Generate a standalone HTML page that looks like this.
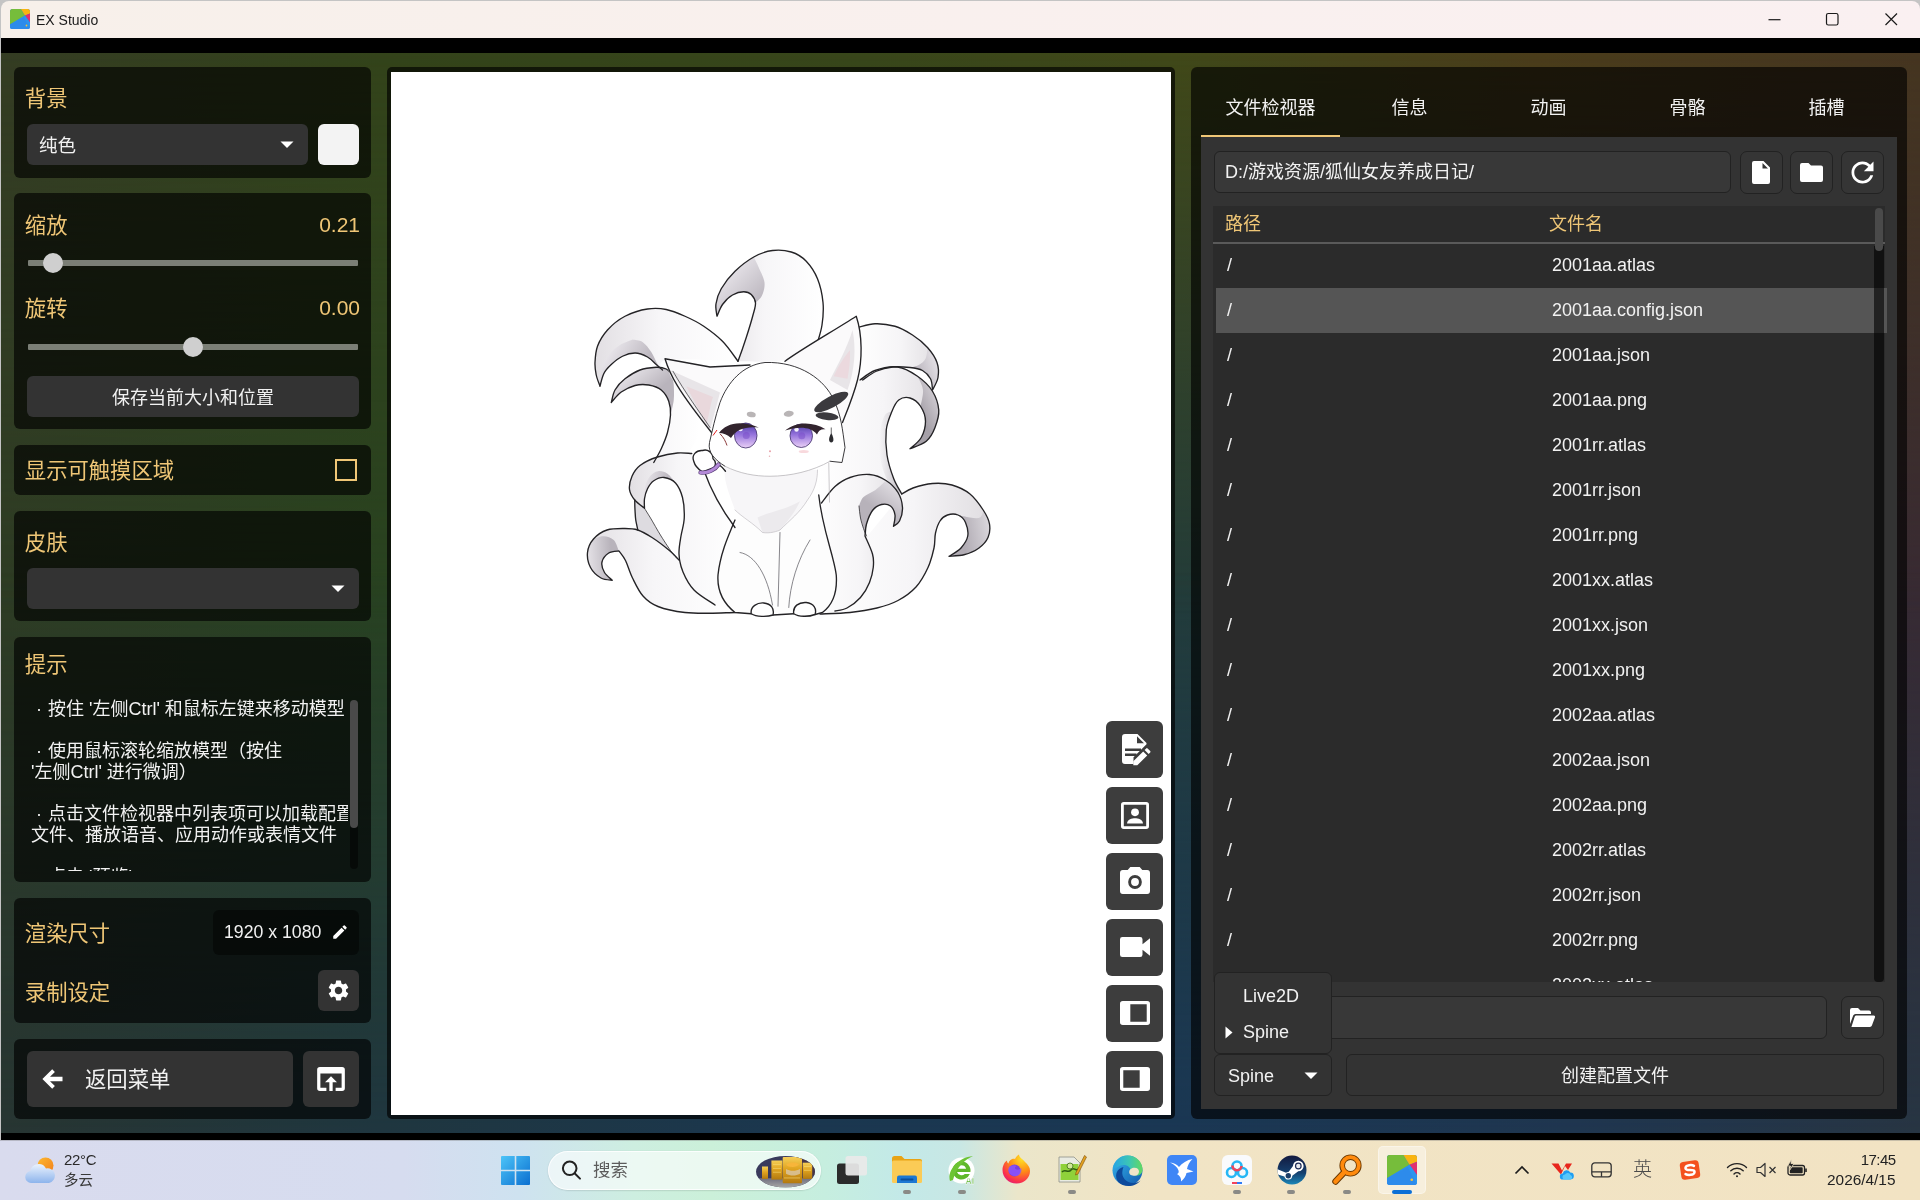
<!DOCTYPE html>
<html lang="zh-CN">
<head>
<meta charset="utf-8">
<title>EX Studio</title>
<style>
*{box-sizing:border-box;margin:0;padding:0}
html,body{width:1920px;height:1200px;overflow:hidden;background:#c4c4c4}
body{font-family:"Liberation Sans","Noto Sans CJK SC",sans-serif;color:#fff;position:relative}
.abs{position:absolute}
#titlebar,#app,#taskbar{will-change:transform}
#titlebar{left:1px;top:1px;width:1919px;height:37px;border-radius:8px 8px 0 0;background:linear-gradient(90deg,#f7f0ea 0%,#f9f0ee 50%,#faf0f1 100%)}
#titlebar .ttl{left:35px;top:9px;font-size:14px;color:#1a1a1a;line-height:20px}
#app{left:1px;top:53px;width:1919px;height:1080px;overflow:hidden;background:#223c3a}
#app .g{position:absolute;left:0;top:0;width:100%;height:100%}
.card{position:absolute;left:13px;width:357px;background:rgba(0,0,0,.64);border-radius:6px}
.h{position:absolute;color:#efc676;font-size:21.33px;line-height:28px;white-space:nowrap}
.btn{position:absolute;background:#333;border-radius:6px;color:#f2f2f2}
.ctr{display:flex;align-items:center;justify-content:center}

#gmid{background:linear-gradient(90deg,#2e3c24 0%,#284220 20%,#253f2e 42%,#223c3a 61%,#2c3238 82%,#382a33 100%)}
#gtop{background:linear-gradient(90deg,#343c23 0%,#33431a 20%,#38461a 45%,#404818 61%,#4a3c1a 80%,#453520 100%);-webkit-mask-image:linear-gradient(180deg,#000 0%,transparent 52%);mask-image:linear-gradient(180deg,#000 0%,transparent 52%)}
#gbot{background:linear-gradient(90deg,#273532 0%,#1f3640 20%,#1b3750 42%,#1a3754 61%,#1f3650 82%,#273543 100%);-webkit-mask-image:linear-gradient(180deg,transparent 48%,#000 100%);mask-image:linear-gradient(180deg,transparent 48%,#000 100%)}
#cv{left:386px;top:14px;width:788px;height:1052px;background:rgba(0,0,0,.66);border-radius:5px}
#cv .w{position:absolute;left:4px;top:5px;width:780px;height:1043px;background:#fff;overflow:hidden}
.cb{position:absolute;left:715px;width:57px;height:57px;background:#3d3d3d;border-radius:6px;display:flex;align-items:center;justify-content:center}
#rp{left:1190px;top:14px;width:716px;height:1052px;background:rgba(0,0,0,.64);border-radius:6px}
#rp .tab{position:absolute;top:0;width:139px;height:70px;line-height:30px;padding-top:26px;text-align:center;font-size:18px;color:#f2f2f2}
#rc{left:10px;top:70px;width:696px;height:972px;background:#333}
.inp{position:absolute;background:#383838;border:1px solid #222;border-radius:6px}
.ib{position:absolute;width:43px;height:43px;background:#353535;border:1px solid #222;border-radius:7px;display:flex;align-items:center;justify-content:center}
#list{left:12px;top:69px;width:672px;height:776px;background:#2b2b2b;clip-path:inset(0 -3px 0 0)}
#list .r{position:absolute;left:3px;width:666px;height:44px;font-size:18px;line-height:42px;color:#f2f2f2}
#list .r i{position:absolute;left:11px;font-style:normal}
#list .r b{position:absolute;left:336px;font-weight:normal;white-space:nowrap}
svg{display:block}
#taskbar{left:0;top:1140px;width:1920px;height:60px;background:linear-gradient(90deg,#d9dbee 0%,#d6dcef 21%,#cee2f0 27%,#cdeee0 33%,#cbf0d9 37%,#c6eedf 43%,#c3e9e8 47%,#c8e7e4 50%,#ebe6ca 53%,#f1e4c5 60%,#f2e3c3 100%)}
</style>
</head>
<body>
<!-- TITLEBAR -->
<div id="titlebar" class="abs">
  <svg class="abs" style="left:9px;top:8px" width="20" height="20" viewBox="0 0 20 20"><defs><clipPath id="ic"><rect width="20" height="20" rx="2.500"/></clipPath></defs><g clip-path="url(#ic)"><rect width="20" height="20" fill="#2f7fe8"/><path d="M0 0h11l4 6.500L0 15.500z" fill="#76bd3b"/><path d="M11 0h9v4.500l-5 2z" fill="#f9b410"/><path d="M20 4.500v9L15 6.500z" fill="#e0306f"/><path d="M15 6.500 20 13.500V20H0v-4.500z" fill="#2c95ee"/><path d="M0 15.500 14 8l6 12H0z" fill="#2e86ea" opacity=".6"/><circle cx="16.500" cy="16.500" r=".9" fill="#f5c33b"/></g></svg>
  <div class="abs ttl">EX Studio</div>
  <svg class="abs" style="left:1759px;top:7px" width="150" height="24" viewBox="0 0 150 24" fill="none" stroke="#1a1a1a" stroke-width="1.200"><path d="M8.500 11.700h12"/><rect x="66.500" y="5.500" width="11.500" height="11.500" rx="1.800"/><path d="M125.500 5.500l11.500 11.500M137 5.500l-11.500 11.500"/></svg>
</div>
<div class="abs" style="left:1px;top:38px;width:1919px;height:1102px;background:#000"></div>
<!-- APP -->
<div id="app" class="abs">
  <div class="g" id="gmid"></div>
  <div class="g" id="gtop"></div>
  <div class="g" id="gbot"></div>
  <!-- LEFT -->

  <!-- card1: background -->
  <div class="card" style="top:14px;height:111px">
    <div class="h" style="left:10.800px;top:18px">背景</div>
    <div class="btn" style="left:13px;top:57px;width:281px;height:41px">
      <div class="abs" style="left:13px;top:9px;font-size:18.5px;line-height:26px;margin-left:-1px">纯色</div>
      <svg class="abs" style="left:253px;top:17px" width="14" height="8" viewBox="0 0 14 8"><path d="M0.5 0.5h13L7 7z" fill="#fff"/></svg>
    </div>
    <div class="abs" style="left:304px;top:57px;width:41px;height:41px;background:#f3f3f3;border-radius:6px"></div>
  </div>
  <!-- card2: scale / rotate -->
  <div class="card" style="top:140px;height:236px">
    <div class="h" style="left:10.800px;top:19px">缩放</div>
    <div class="h" style="right:11px;top:18px;font-size:21px">0.21</div>
    <div class="abs" style="left:14px;top:67px;width:330px;height:6px;background:#7b7f76;border-radius:1px"></div>
    <div class="abs" style="left:29px;top:60px;width:20px;height:20px;border-radius:50%;background:#cfcfcf"></div>
    <div class="h" style="left:10.800px;top:102px">旋转</div>
    <div class="h" style="right:11px;top:101px;font-size:21px">0.00</div>
    <div class="abs" style="left:14px;top:151px;width:330px;height:6px;background:#7b7f76;border-radius:1px"></div>
    <div class="abs" style="left:169px;top:144px;width:20px;height:20px;border-radius:50%;background:#cfcfcf"></div>
    <div class="btn ctr" style="left:13px;top:183px;width:332px;height:41px;font-size:18px;padding-bottom:2px">保存当前大小和位置</div>
  </div>
  <!-- card3: touch area -->
  <div class="card" style="top:392px;height:50px">
    <div class="h" style="left:10.800px;top:12px">显示可触摸区域</div>
    <div class="abs" style="left:321px;top:14px;width:22px;height:22px;border:2px solid #efc676"></div>
  </div>
  <!-- card4: skin -->
  <div class="card" style="top:458px;height:110px">
    <div class="h" style="left:10.800px;top:18px">皮肤</div>
    <div class="btn" style="left:13px;top:57px;width:332px;height:41px">
      <svg class="abs" style="left:304px;top:17px" width="14" height="8" viewBox="0 0 14 8"><path d="M0.5 0.5h13L7 7z" fill="#fff"/></svg>
    </div>
  </div>
  <!-- card5: tips -->
  <div class="card" style="top:584px;height:245px;overflow:hidden">
    <div class="h" style="left:10.800px;top:14px">提示</div>
    <div class="abs" id="tips" style="left:17px;top:62px;width:317px;height:172px;overflow:hidden;font-size:18px;line-height:21px;color:#f2f2f2;white-space:nowrap">
      <p>&nbsp;·<span style="margin-left:6px"></span>按住 '左侧Ctrl' 和鼠标左键来移动模型</p>
      <p style="margin-top:21px">&nbsp;·<span style="margin-left:6px"></span>使用鼠标滚轮缩放模型（按住<br>'左侧Ctrl' 进行微调）</p>
      <p style="margin-top:21px">&nbsp;·<span style="margin-left:6px"></span>点击文件检视器中列表项可以加载配置<br>文件、播放语音、应用动作或表情文件</p>
      <p style="margin-top:21px">&nbsp;·<span style="margin-left:6px"></span>点击 '预览'</p>
    </div>
    <div class="abs" style="left:336px;top:185px;width:8.400px;height:47px;background:rgba(0,0,0,.5);border-radius:0 0 4px 4px"></div>
    <div class="abs" style="left:336px;top:63px;width:8.400px;height:128px;background:#4a4a4a;border-radius:4px"></div>
  </div>
  <!-- card6: render size -->
  <div class="card" style="top:845px;height:125px">
    <div class="h" style="left:10.800px;top:22px">渲染尺寸</div>
    <div class="abs" style="left:199px;top:12px;width:146px;height:45px;background:rgba(0,0,0,.45);border-radius:6px">
      <div class="abs" style="left:11px;top:10px;font-size:17.7px;line-height:24px;color:#f2f2f2;white-space:nowrap">1920 x 1080</div>
      <svg class="abs" style="left:118px;top:13px" width="18" height="18" viewBox="0 0 24 24"><path fill="#fff" d="M3 17.25V21h3.75L17.81 9.94l-3.75-3.75L3 17.25zM20.71 7.04a1 1 0 0 0 0-1.41l-2.34-2.34a1 1 0 0 0-1.41 0l-1.83 1.83 3.75 3.75 1.83-1.83z"/></svg>
    </div>
    <div class="h" style="left:10.800px;top:81px">录制设定</div>
    <div class="btn ctr" style="left:304px;top:72px;width:41px;height:41px">
      <svg width="25" height="25" viewBox="0 0 24 24"><path fill="#fff" d="M19.14 12.94c.04-.3.06-.61.06-.94 0-.32-.02-.64-.07-.94l2.03-1.58a.49.49 0 0 0 .12-.61l-1.92-3.32a.488.488 0 0 0-.59-.22l-2.39.96c-.5-.38-1.03-.7-1.62-.94l-.36-2.54a.484.484 0 0 0-.48-.41h-3.84c-.24 0-.43.17-.47.41l-.36 2.54c-.59.24-1.13.57-1.62.94l-2.39-.96c-.22-.08-.47 0-.59.22L2.74 8.87c-.12.21-.08.47.12.61l2.03 1.58c-.05.3-.09.63-.09.94s.02.64.07.94l-2.03 1.58a.49.49 0 0 0-.12.61l1.92 3.32c.12.22.37.29.59.22l2.39-.96c.5.38 1.03.7 1.62.94l.36 2.54c.05.24.24.41.48.41h3.84c.24 0 .44-.17.47-.41l.36-2.54c.59-.24 1.13-.56 1.62-.94l2.39.96c.22.08.47 0 .59-.22l1.92-3.32c.12-.22.07-.47-.12-.61l-2.01-1.58zM12 15.6c-1.98 0-3.6-1.62-3.6-3.6s1.62-3.6 3.6-3.6 3.6 1.62 3.6 3.6-1.62 3.6-3.6 3.6z"/></svg>
    </div>
  </div>
  <!-- card7: back -->
  <div class="card" style="top:986px;height:80px">
    <div class="btn" style="left:13px;top:12px;width:266px;height:56px">
      <svg class="abs" style="left:15px;top:17px" width="21" height="22" viewBox="0 0 21 22"><path fill="#fff" d="M10.2 1.2 12.9 3.9 8 8.8H20.5v4.4H8l4.9 4.9-2.7 2.7L0.4 11z"/></svg>
      <div class="abs" style="left:58px;top:14px;font-size:21.33px;line-height:30px;white-space:nowrap">返回菜单</div>
    </div>
    <div class="btn ctr" style="left:289px;top:12px;width:56px;height:56px">
      <svg width="28" height="24" viewBox="0 0 30 26"><path fill="#fff" fill-rule="evenodd" d="M3 0h24a3 3 0 0 1 3 3v20a3 3 0 0 1-3 3h-7v-3.5h6.5V7h-23v15.5H10V26H3a3 3 0 0 1-3-3V3a3 3 0 0 1 3-3zM15 10l6.5 6.5h-4.7V26h-3.6v-9.5H8.500z"/></svg>
    </div>
  </div>
  <!-- CANVAS -->

  <div id="cv" class="abs">
    <div class="w">
      <!-- FOX -->
<svg class="abs" style="left:169px;top:158px" width="480" height="470" viewBox="0 0 1920 1880">
<defs>
<linearGradient id="tgL" x1="0" y1="0" x2="1" y2="0"><stop offset="0" stop-color="#e2dfe3"/><stop offset=".45" stop-color="#f7f6f8"/><stop offset="1" stop-color="#fff"/></linearGradient>
<linearGradient id="tgR" x1="1" y1="0" x2="0" y2="0"><stop offset="0" stop-color="#e0dde1"/><stop offset=".45" stop-color="#f6f5f7"/><stop offset="1" stop-color="#fff"/></linearGradient>
<linearGradient id="eye" x1="0" y1="0" x2="0" y2="1"><stop offset="0" stop-color="#4b3aa6"/><stop offset=".45" stop-color="#9472dc"/><stop offset="1" stop-color="#ead0f6"/></linearGradient>
<linearGradient id="g1" gradientUnits="userSpaceOnUse" x1="800" y1="290" x2="660" y2="150"><stop offset="0" stop-color="#bbb6be" stop-opacity="1"/><stop offset="1" stop-color="#ebe8ed" stop-opacity="1"/></linearGradient>
<linearGradient id="g9" gradientUnits="userSpaceOnUse" x1="1430" y1="575" x2="1520" y2="540"><stop offset="0" stop-color="#bcb7bf" stop-opacity="1"/><stop offset="1" stop-color="#e6e3e8" stop-opacity="1"/></linearGradient>
<linearGradient id="g2" gradientUnits="userSpaceOnUse" x1="345" y1="525" x2="215" y2="440"><stop offset="0" stop-color="#bdb8c0" stop-opacity="1"/><stop offset="1" stop-color="#ebe8ed" stop-opacity="1"/></linearGradient>
<linearGradient id="g3" gradientUnits="userSpaceOnUse" x1="380" y1="650" x2="300" y2="550"><stop offset="0" stop-color="#b9b4bc" stop-opacity="1"/><stop offset="1" stop-color="#e4e1e6" stop-opacity="1"/></linearGradient>
<linearGradient id="g8" gradientUnits="userSpaceOnUse" x1="1440" y1="730" x2="1525" y2="690"><stop offset="0" stop-color="#a5a0a8" stop-opacity="1"/><stop offset="1" stop-color="#d2ced4" stop-opacity="1"/></linearGradient>
<linearGradient id="g8s" gradientUnits="userSpaceOnUse" x1="1275" y1="900" x2="1345" y2="900"><stop offset="0" stop-color="#d6d3d8" stop-opacity="0"/><stop offset="1" stop-color="#cfcbd1" stop-opacity="1"/></linearGradient>
<linearGradient id="g4" gradientUnits="userSpaceOnUse" x1="425" y1="1005" x2="345" y2="985"><stop offset="0" stop-color="#bfbac2" stop-opacity="1"/><stop offset="1" stop-color="#e6e3e8" stop-opacity="1"/></linearGradient>
<linearGradient id="g5" gradientUnits="userSpaceOnUse" x1="205" y1="1295" x2="115" y2="1300"><stop offset="0" stop-color="#b8b3bb" stop-opacity="1"/><stop offset="1" stop-color="#e2dfe4" stop-opacity="1"/></linearGradient>
<linearGradient id="g7" gradientUnits="userSpaceOnUse" x1="1610" y1="1210" x2="1725" y2="1190"><stop offset="0" stop-color="#b1acb4" stop-opacity="1"/><stop offset="1" stop-color="#dcd9de" stop-opacity="1"/></linearGradient>
<linearGradient id="g6" gradientUnits="userSpaceOnUse" x1="1270" y1="1120" x2="1345" y2="1015"><stop offset="0" stop-color="#b7b2ba" stop-opacity="1"/><stop offset="1" stop-color="#e2dfe4" stop-opacity="1"/></linearGradient>
</defs>
<g stroke="none">
<path fill="url(#tgL)" d="M712,525 C718,509 735,461 745,430 C755,399 766,363 772,340 C778,317 783,306 782,292 C781,278 773,266 765,258 C757,250 748,247 735,247 C722,247 704,252 690,260 C676,268 660,284 650,298 C640,312 632,337 628,345 C627,337 621,313 624,295 C627,277 632,257 645,235 C658,213 678,186 700,165 C722,144 750,122 775,108 C800,94 825,85 850,82 C875,79 902,81 925,88 C948,95 968,107 985,125 C1002,143 1019,168 1030,195 C1041,222 1049,259 1052,290 C1055,321 1052,353 1048,380 C1044,407 1033,438 1030,450 C1008,462 953,508 900,520 C847,532 743,524 712,525 Z"/>
<path fill="url(#g1)" d="M628,345 C627,337 621,313 624,295 C627,277 632,257 645,235 C658,213 678,186 700,165 C722,144 762,118 775,108 C778,115 788,133 795,150 C802,167 816,191 818,210 C820,229 814,248 808,262 C802,276 786,287 782,292 C779,286 773,266 765,258 C757,250 748,247 735,247 C722,247 704,252 690,260 C676,268 660,284 650,298 C640,312 632,337 628,345 Z"/>
<path fill="url(#tgR)" d="M1190,390 C1202,388 1235,376 1260,375 C1285,374 1315,378 1340,385 C1365,392 1388,406 1410,420 C1432,434 1454,452 1470,470 C1486,488 1501,510 1508,530 C1515,550 1515,572 1512,590 C1509,608 1494,632 1490,640 C1489,632 1489,608 1482,595 C1475,582 1464,570 1450,562 C1436,554 1420,552 1400,550 C1380,548 1352,546 1330,548 C1308,550 1285,556 1265,565 C1245,574 1219,594 1210,600 C1205,607 1183,675 1180,640 C1177,605 1188,432 1190,390 Z"/>
<path fill="url(#g9)" d="M1490,640 C1494,632 1509,608 1512,590 C1515,572 1515,550 1508,530 C1501,510 1476,480 1470,470 C1469,478 1468,503 1462,515 C1456,527 1445,534 1435,540 C1425,546 1406,548 1400,550 C1408,552 1436,554 1450,562 C1464,570 1475,582 1482,595 C1489,608 1489,632 1490,640 Z"/>
<path fill="url(#tgL)" d="M712,525 C702,512 673,468 650,445 C627,422 600,402 575,385 C550,368 525,356 500,345 C475,334 450,323 425,318 C400,313 378,312 350,316 C322,320 287,331 260,345 C233,359 208,380 190,400 C172,420 158,443 150,465 C142,487 141,511 140,530 C139,549 142,564 145,580 C148,596 158,618 160,625 C162,617 168,590 175,575 C182,560 192,550 205,538 C218,526 234,513 250,505 C266,497 283,492 300,492 C317,492 336,500 350,508 C364,516 375,529 385,538 C395,547 406,556 410,560 C413,553 380,526 430,520 C480,514 665,524 712,525 Z"/>
<path fill="url(#g2)" d="M160,625 C161,614 159,581 165,560 C171,539 182,517 195,500 C208,483 224,470 240,460 C256,450 282,442 290,438 C297,440 318,440 330,448 C342,456 355,473 365,488 C375,503 384,528 392,540 C400,552 407,557 410,560 C406,556 395,547 385,538 C375,529 364,516 350,508 C336,500 317,492 300,492 C283,492 266,497 250,505 C234,513 218,526 205,538 C192,550 182,560 175,575 C168,590 162,617 160,625 Z"/>
<path fill="url(#tgL)" d="M448,578 C444,574 436,561 425,556 C414,551 402,548 385,549 C368,550 341,552 320,560 C299,568 277,582 260,595 C243,608 229,624 220,640 C211,656 208,682 205,690 C212,683 229,659 245,648 C261,637 282,627 300,622 C318,617 338,617 355,620 C372,623 392,629 405,640 C418,651 429,668 435,685 C441,702 443,719 442,740 C441,761 436,788 430,810 C424,832 414,855 405,875 C396,895 380,921 375,930 C396,925 469,923 500,900 C531,877 557,823 560,790 C563,757 539,735 520,700 C501,665 460,598 448,578 Z"/>
<path fill="url(#g3)" d="M448,578 C444,574 436,561 425,556 C414,551 402,548 385,549 C368,550 341,552 320,560 C299,568 277,582 260,595 C243,608 229,624 220,640 C211,656 208,682 205,690 C212,683 229,659 245,648 C261,637 282,627 300,622 C318,617 338,617 355,620 C372,623 392,629 405,640 C418,651 429,668 435,685 C441,702 441,731 442,740 C444,730 453,700 455,680 C457,660 456,637 455,620 C454,603 449,585 448,578 Z"/>
<path fill="url(#tgR)" d="M1200,600 C1210,594 1235,571 1260,562 C1285,553 1322,544 1350,548 C1378,552 1407,569 1430,585 C1453,601 1476,622 1490,645 C1504,668 1513,696 1515,720 C1517,744 1508,769 1500,790 C1492,811 1482,831 1465,845 C1448,859 1411,870 1400,875 C1408,868 1435,848 1445,830 C1455,812 1462,786 1462,765 C1462,744 1452,720 1442,705 C1432,690 1414,676 1400,672 C1386,668 1367,671 1355,680 C1343,689 1336,705 1328,725 C1320,745 1308,771 1305,800 C1302,829 1303,868 1308,900 C1313,932 1325,969 1335,995 C1345,1021 1362,1046 1367,1056 C1316,1060 1114,1106 1060,1080 C1006,1054 1025,972 1040,900 C1055,828 1123,700 1150,650 C1177,600 1192,608 1200,600 Z"/>
<path fill="url(#g8)" d="M1400,875 C1411,870 1448,859 1465,845 C1482,831 1492,811 1500,790 C1508,769 1517,744 1515,720 C1513,696 1504,668 1490,645 C1476,622 1440,595 1430,585 C1434,594 1450,620 1452,640 C1454,660 1444,694 1442,705 C1445,715 1462,744 1462,765 C1462,786 1455,812 1445,830 C1435,848 1408,868 1400,875 Z"/>
<path fill="url(#g8s)" d="M1328,725 C1324,738 1308,771 1305,800 C1302,829 1303,868 1308,900 C1313,932 1325,969 1335,995 C1345,1021 1362,1046 1367,1056 C1362,1053 1346,1053 1335,1040 C1324,1027 1309,1003 1300,980 C1291,957 1283,930 1280,900 C1277,870 1279,827 1282,800 C1285,773 1292,752 1300,740 C1308,728 1323,728 1328,725 Z"/>
<path fill="#dddbe0" d="M299,1080 C302,1083 312,1094 318,1100 C324,1106 335,1111 338,1113 C342,1120 351,1134 362,1152 C373,1170 389,1200 404,1224 C419,1248 440,1280 452,1296 C464,1312 472,1316 476,1320 C470,1314 458,1299 440,1284 C422,1269 390,1244 368,1230 C346,1216 320,1205 311,1200 C310,1193 305,1173 303,1160 C301,1147 301,1133 300,1120 C299,1107 299,1087 299,1080 Z"/>
<path fill="url(#tgL)" d="M527,894 C518,894 493,890 470,892 C447,894 415,900 390,908 C365,916 337,929 320,942 C303,955 295,969 288,985 C281,1001 276,1022 278,1038 C280,1054 289,1068 299,1080 C309,1092 332,1108 338,1113 C338,1107 336,1088 338,1075 C340,1062 344,1047 350,1035 C356,1023 364,1010 375,1003 C386,996 402,988 416,990 C430,992 450,999 462,1012 C474,1025 484,1047 490,1070 C496,1093 498,1126 497,1152 C496,1178 488,1200 484,1224 C480,1248 475,1272 476,1296 C477,1320 482,1344 492,1368 C502,1392 515,1418 536,1440 C557,1462 606,1490 620,1500 C633,1498 687,1547 700,1490 C713,1433 710,1252 700,1160 C690,1068 669,984 640,940 C611,896 546,902 527,894 Z"/>
<path fill="url(#g4)" d="M338,1113 C338,1107 336,1088 338,1075 C340,1062 344,1047 350,1035 C356,1023 364,1010 375,1003 C386,996 402,988 416,990 C430,992 454,1008 462,1012 C457,1006 442,983 430,975 C418,967 404,963 392,965 C380,967 369,974 360,985 C351,996 344,1009 340,1030 C336,1051 338,1099 338,1113 Z"/>
<path fill="url(#tgL)" d="M476,1320 C470,1314 458,1299 440,1284 C422,1269 390,1244 368,1230 C346,1216 329,1206 311,1200 C293,1194 280,1194 260,1194 C240,1194 209,1193 188,1200 C167,1207 147,1221 134,1236 C121,1251 112,1271 110,1290 C108,1309 113,1333 122,1350 C131,1367 150,1384 164,1392 C178,1400 202,1400 209,1401 C204,1396 185,1382 178,1370 C171,1358 165,1341 168,1328 C171,1315 184,1299 195,1292 C206,1285 229,1285 236,1284 C240,1290 253,1304 262,1322 C271,1340 278,1368 290,1392 C302,1416 315,1445 332,1464 C349,1483 364,1495 392,1506 C420,1517 465,1526 500,1530 C535,1534 567,1533 600,1533 C633,1533 683,1530 700,1530 C687,1525 647,1515 620,1500 C593,1485 560,1470 536,1440 C512,1410 486,1340 476,1320 Z"/>
<path fill="url(#g5)" d="M209,1401 C202,1400 178,1400 164,1392 C150,1384 131,1367 122,1350 C113,1333 108,1309 110,1290 C112,1271 130,1245 134,1236 C141,1234 162,1224 175,1225 C188,1226 205,1230 215,1240 C225,1250 232,1277 236,1284 C229,1285 206,1285 195,1292 C184,1299 171,1315 168,1328 C165,1341 171,1358 178,1370 C185,1382 204,1396 209,1401 Z"/>
<path fill="url(#tgR)" d="M1367,1056 C1374,1052 1392,1039 1412,1032 C1432,1025 1464,1016 1490,1014 C1516,1012 1543,1013 1568,1020 C1593,1027 1619,1039 1640,1056 C1661,1073 1681,1102 1694,1122 C1707,1142 1715,1158 1718,1176 C1721,1194 1719,1214 1712,1230 C1705,1246 1692,1260 1676,1272 C1660,1284 1636,1294 1616,1299 C1596,1304 1566,1304 1556,1305 C1564,1300 1592,1286 1604,1272 C1616,1258 1628,1241 1631,1224 C1634,1207 1628,1184 1622,1170 C1616,1156 1604,1145 1592,1140 C1580,1135 1562,1136 1550,1140 C1538,1144 1528,1152 1520,1164 C1512,1176 1506,1194 1502,1212 C1498,1230 1501,1249 1496,1272 C1491,1295 1484,1324 1472,1350 C1460,1376 1444,1406 1424,1428 C1404,1450 1378,1468 1352,1482 C1326,1496 1300,1504 1268,1512 C1236,1520 1198,1526 1160,1530 C1122,1534 1060,1535 1040,1536 C1050,1510 1065,1436 1100,1380 C1135,1324 1206,1254 1250,1200 C1294,1146 1348,1080 1367,1056 Z"/>
<path fill="url(#g7)" d="M1556,1305 C1566,1304 1596,1304 1616,1299 C1636,1294 1660,1284 1676,1272 C1692,1260 1705,1246 1712,1230 C1719,1214 1721,1194 1718,1176 C1715,1158 1698,1131 1694,1122 C1692,1127 1689,1145 1680,1150 C1671,1155 1655,1152 1640,1150 C1625,1148 1600,1142 1592,1140 C1597,1145 1616,1156 1622,1170 C1628,1184 1634,1207 1631,1224 C1628,1241 1616,1258 1604,1272 C1592,1286 1564,1300 1556,1305 Z"/>
<path fill="url(#tgR)" d="M1046,1092 C1055,1081 1081,1043 1100,1026 C1119,1009 1137,998 1160,990 C1183,982 1214,976 1238,978 C1262,980 1285,990 1304,1002 C1323,1014 1341,1032 1352,1050 C1363,1068 1369,1091 1370,1110 C1371,1129 1364,1152 1358,1164 C1352,1176 1338,1182 1334,1185 C1335,1178 1342,1154 1340,1140 C1338,1126 1331,1111 1322,1104 C1313,1097 1298,1095 1286,1098 C1274,1101 1260,1109 1250,1122 C1240,1135 1231,1159 1226,1176 C1221,1193 1221,1216 1220,1224 C1225,1236 1244,1275 1250,1296 C1256,1317 1255,1331 1253,1350 C1251,1369 1246,1390 1238,1410 C1230,1430 1217,1453 1202,1470 C1187,1487 1165,1503 1148,1512 C1131,1521 1108,1522 1100,1524 C1083,1525 1009,1602 1000,1530 C991,1458 1038,1165 1046,1092 Z"/>
<path fill="url(#g6)" d="M1334,1185 C1338,1182 1352,1176 1358,1164 C1364,1152 1371,1129 1370,1110 C1369,1091 1363,1068 1352,1050 C1341,1032 1312,1010 1304,1002 C1297,1008 1277,1029 1262,1040 C1247,1051 1225,1057 1214,1068 C1203,1079 1199,1098 1196,1104 C1197,1112 1199,1137 1202,1152 C1205,1167 1210,1182 1214,1194 C1218,1206 1224,1219 1226,1224 C1226,1216 1222,1193 1226,1176 C1230,1159 1240,1135 1250,1122 C1260,1109 1274,1101 1286,1098 C1298,1095 1313,1097 1322,1104 C1331,1111 1338,1126 1340,1140 C1342,1154 1335,1178 1334,1185 Z"/>
</g>
<g fill="none" stroke="#242326" stroke-linejoin="round" stroke-linecap="round">
<path stroke-width="5.4" d="M712,525 C718,509 735,461 745,430 C755,399 766,363 772,340 C778,317 783,306 782,292 C781,278 773,266 765,258 C757,250 748,247 735,247 C722,247 704,252 690,260 C676,268 660,284 650,298 C640,312 632,337 628,345 C627,337 621,313 624,295 C627,277 632,257 645,235 C658,213 678,186 700,165 C722,144 750,122 775,108 C800,94 825,85 850,82 C875,79 902,81 925,88 C948,95 968,107 985,125 C1002,143 1019,168 1030,195 C1041,222 1049,259 1052,290 C1055,321 1052,353 1048,380 C1044,407 1033,438 1030,450"/>
<path stroke-width="5.4" d="M1190,390 C1202,388 1235,376 1260,375 C1285,374 1315,378 1340,385 C1365,392 1388,406 1410,420 C1432,434 1454,452 1470,470 C1486,488 1501,510 1508,530 C1515,550 1515,572 1512,590 C1509,608 1494,632 1490,640 C1489,632 1489,608 1482,595 C1475,582 1464,570 1450,562 C1436,554 1420,552 1400,550 C1380,548 1352,546 1330,548 C1308,550 1285,556 1265,565 C1245,574 1219,594 1210,600"/>
<path stroke-width="5.4" d="M712,525 C702,512 673,468 650,445 C627,422 600,402 575,385 C550,368 525,356 500,345 C475,334 450,323 425,318 C400,313 378,312 350,316 C322,320 287,331 260,345 C233,359 208,380 190,400 C172,420 158,443 150,465 C142,487 141,511 140,530 C139,549 142,564 145,580 C148,596 158,618 160,625 C162,617 168,590 175,575 C182,560 192,550 205,538 C218,526 234,513 250,505 C266,497 283,492 300,492 C317,492 336,500 350,508 C364,516 375,529 385,538 C395,547 406,556 410,560"/>
<path stroke-width="5.4" d="M448,578 C444,574 436,561 425,556 C414,551 402,548 385,549 C368,550 341,552 320,560 C299,568 277,582 260,595 C243,608 229,624 220,640 C211,656 208,682 205,690 C212,683 229,659 245,648 C261,637 282,627 300,622 C318,617 338,617 355,620 C372,623 392,629 405,640 C418,651 429,668 435,685 C441,702 443,719 442,740 C441,761 436,788 430,810 C424,832 414,855 405,875 C396,895 380,921 375,930"/>
<path stroke-width="5.4" d="M1200,600 C1210,594 1235,571 1260,562 C1285,553 1322,544 1350,548 C1378,552 1407,569 1430,585 C1453,601 1476,622 1490,645 C1504,668 1513,696 1515,720 C1517,744 1508,769 1500,790 C1492,811 1482,831 1465,845 C1448,859 1411,870 1400,875 C1408,868 1435,848 1445,830 C1455,812 1462,786 1462,765 C1462,744 1452,720 1442,705 C1432,690 1414,676 1400,672 C1386,668 1367,671 1355,680 C1343,689 1336,705 1328,725 C1320,745 1308,771 1305,800 C1302,829 1303,868 1308,900 C1313,932 1325,969 1335,995 C1345,1021 1362,1046 1367,1056"/>
<path stroke-width="5.4" d="M299,1080 C299,1087 299,1107 300,1120 C301,1133 301,1147 303,1160 C305,1173 310,1193 311,1200"/>
<path stroke-width="3.0" d="M338,1113 C342,1120 351,1134 362,1152 C373,1170 389,1200 404,1224 C419,1248 440,1280 452,1296 C464,1312 472,1316 476,1320"/>
<path stroke-width="5.4" d="M527,894 C518,894 493,890 470,892 C447,894 415,900 390,908 C365,916 337,929 320,942 C303,955 295,969 288,985 C281,1001 276,1022 278,1038 C280,1054 289,1068 299,1080 C309,1092 332,1108 338,1113 C338,1107 336,1088 338,1075 C340,1062 344,1047 350,1035 C356,1023 364,1010 375,1003 C386,996 402,988 416,990 C430,992 450,999 462,1012 C474,1025 484,1047 490,1070 C496,1093 498,1126 497,1152 C496,1178 488,1200 484,1224 C480,1248 475,1272 476,1296 C477,1320 482,1344 492,1368 C502,1392 515,1418 536,1440 C557,1462 606,1490 620,1500"/>
<path stroke-width="5.4" d="M476,1320 C470,1314 458,1299 440,1284 C422,1269 390,1244 368,1230 C346,1216 329,1206 311,1200 C293,1194 280,1194 260,1194 C240,1194 209,1193 188,1200 C167,1207 147,1221 134,1236 C121,1251 112,1271 110,1290 C108,1309 113,1333 122,1350 C131,1367 150,1384 164,1392 C178,1400 202,1400 209,1401 C204,1396 185,1382 178,1370 C171,1358 165,1341 168,1328 C171,1315 184,1299 195,1292 C206,1285 229,1285 236,1284 C240,1290 253,1304 262,1322 C271,1340 278,1368 290,1392 C302,1416 315,1445 332,1464 C349,1483 364,1495 392,1506 C420,1517 465,1526 500,1530 C535,1534 567,1533 600,1533 C633,1533 683,1530 700,1530"/>
<path stroke-width="5.4" d="M1367,1056 C1374,1052 1392,1039 1412,1032 C1432,1025 1464,1016 1490,1014 C1516,1012 1543,1013 1568,1020 C1593,1027 1619,1039 1640,1056 C1661,1073 1681,1102 1694,1122 C1707,1142 1715,1158 1718,1176 C1721,1194 1719,1214 1712,1230 C1705,1246 1692,1260 1676,1272 C1660,1284 1636,1294 1616,1299 C1596,1304 1566,1304 1556,1305 C1564,1300 1592,1286 1604,1272 C1616,1258 1628,1241 1631,1224 C1634,1207 1628,1184 1622,1170 C1616,1156 1604,1145 1592,1140 C1580,1135 1562,1136 1550,1140 C1538,1144 1528,1152 1520,1164 C1512,1176 1506,1194 1502,1212 C1498,1230 1501,1249 1496,1272 C1491,1295 1484,1324 1472,1350 C1460,1376 1444,1406 1424,1428 C1404,1450 1378,1468 1352,1482 C1326,1496 1300,1504 1268,1512 C1236,1520 1198,1526 1160,1530 C1122,1534 1060,1535 1040,1536"/>
<path stroke-width="5.4" d="M1046,1092 C1055,1081 1081,1043 1100,1026 C1119,1009 1137,998 1160,990 C1183,982 1214,976 1238,978 C1262,980 1285,990 1304,1002 C1323,1014 1341,1032 1352,1050 C1363,1068 1369,1091 1370,1110 C1371,1129 1364,1152 1358,1164 C1352,1176 1338,1182 1334,1185 C1335,1178 1342,1154 1340,1140 C1338,1126 1331,1111 1322,1104 C1313,1097 1298,1095 1286,1098 C1274,1101 1260,1109 1250,1122 C1240,1135 1231,1159 1226,1176 C1221,1193 1221,1216 1220,1224 C1225,1236 1244,1275 1250,1296 C1256,1317 1255,1331 1253,1350 C1251,1369 1246,1390 1238,1410 C1230,1430 1217,1453 1202,1470 C1187,1487 1165,1503 1148,1512 C1131,1521 1108,1522 1100,1524"/>
<path stroke-width="3.0" d="M1196,1104 C1197,1112 1199,1137 1202,1152 C1205,1167 1210,1182 1214,1194 C1218,1206 1224,1219 1226,1224"/>
</g>
<g stroke="none">
<path fill="#fdfdfd" d="M700,1160 C670,1230 640,1300 632,1380 C628,1440 650,1490 700,1530 L1050,1530 C1090,1500 1110,1450 1105,1380 C1095,1300 1050,1200 1035,1060 Z"/>
<path fill="#fff" d="M575,960 C600,1030 640,1110 700,1190 L760,1100 L665,960 L630,930 Z"/>
<path fill="#f7f6f8" d="M660,940 C650,1000 680,1060 700,1120 C730,1150 770,1170 810,1210 C840,1215 870,1205 880,1200 C920,1160 960,1130 990,1080 C1020,1040 1030,1000 1030,960 Z"/>
<path fill="#eceaed" d="M790,1150 C830,1130 900,1120 960,1085 C940,1130 910,1165 880,1200 C850,1212 820,1212 810,1210 Z"/>
<path fill="#fbfafb" d="M420,515 L600,548 L760,540 L650,680 L610,815 C560,740 470,640 440,580 Z"/>
<path fill="#e8e5e8" d="M440,560 L640,650 L600,800 Z"/><path fill="#e9d8dc" d="M505,625 L612,668 C600,700 598,740 585,775 Z"/>
<path fill="#fbfafb" d="M900,525 C960,480 1100,400 1185,345 C1210,420 1210,520 1190,600 C1175,660 1150,720 1130,770 L1060,620 Z"/>
<path fill="#e8e5e8" d="M1170,400 C1185,470 1180,560 1150,640 L1080,600 C1110,540 1150,470 1170,400Z"/><path fill="#ebd9de" d="M1160,480 C1162,520 1156,560 1150,595 L1095,585 C1110,550 1135,510 1160,480Z"/>
</g>
<g fill="none" stroke="#242326" stroke-width="5.400" stroke-linejoin="round" stroke-linecap="round">
<path d="M700,1160 C670,1230 640,1300 632,1380 C628,1440 650,1490 700,1530 L765,1535 M852,1540 L935,1535 M1020,1538 L1050,1530 C1090,1500 1110,1450 1105,1380 C1095,1300 1050,1200 1035,1060"/>
<path stroke-width="2.800" stroke="#55535a" d="M720,1290 C780,1300 830,1380 850,1500 M1000,1240 C950,1320 920,1420 915,1510 M880,1210 L872,1505"/>
<path fill="#fff" d="M765,1535 C760,1505 790,1490 815,1492 C845,1495 858,1515 852,1540 C830,1548 785,1548 765,1535Z M935,1535 C930,1505 955,1488 985,1490 C1015,1493 1028,1515 1020,1538 C995,1548 955,1548 935,1535Z"/>
<path d="M575,960 C600,1030 640,1110 700,1190 M632,935 C645,945 655,955 662,965"/>
<path stroke="#b9b6bb" stroke-width="2.400" d="M700,1120 C730,1150 770,1170 810,1210 C840,1215 870,1205 880,1200 C920,1160 960,1130 990,1080 C1020,1040 1030,1000 1030,960"/>
<path fill="#fff" d="M535,925 C525,900 545,880 570,882 C590,875 612,890 612,915 C625,925 625,945 612,952 L570,968 C550,955 540,945 535,925Z"/>
<path stroke="#5a3f78" stroke-width="17" d="M562,970 C590,974 620,960 634,938"/><path stroke="#b48ad8" stroke-width="12" d="M562,970 C590,974 620,960 634,938"/>
<path d="M760,540 L600,548 L420,515 C440,580 470,640 610,815"/>
<path stroke-width="2.600" d="M452,565 C500,650 560,730 600,790"/>
<path d="M900,525 C960,480 1100,400 1185,345 C1210,420 1210,520 1190,600 C1175,660 1150,720 1130,770"/>
<path fill="#fff" stroke="none" d="M820,530 C730,540 670,610 640,690 C620,750 610,800 598,850 C590,890 620,920 660,945 C720,975 780,985 840,985 C920,985 1010,965 1080,925 L1128,930 L1140,870 C1130,800 1125,740 1095,680 C1060,600 960,525 820,530Z"/><path stroke-width="3.600" d="M660,945 C620,920 590,890 598,850 C610,800 620,750 640,690 C670,610 730,540 820,530 C960,525 1060,600 1095,680 C1125,740 1130,800 1140,870 L1128,930 L1080,925"/><path stroke="#b4b1b6" stroke-width="3" d="M660,945 C720,975 780,985 840,985 C920,985 1010,965 1080,925"/>
</g>
<ellipse cx="765" cy="738" rx="18" ry="11" fill="#b9b5b6" transform="rotate(8 765 738)"/>
<ellipse cx="915" cy="735" rx="20" ry="12" fill="#b9b5b6" transform="rotate(-8 915 735)"/>
<ellipse cx="743" cy="822" rx="45" ry="50" fill="url(#eye)" stroke="#4a3a72" stroke-width="3.500"/>
<ellipse cx="965" cy="823" rx="45" ry="47" fill="url(#eye)" stroke="#4a3a72" stroke-width="3.500"/>
<circle cx="745" cy="822" r="14" fill="#7a4fc8" opacity=".55"/><circle cx="967" cy="823" r="14" fill="#7a4fc8" opacity=".55"/>
<circle cx="722" cy="796" r="9" fill="#fff" opacity=".92"/><circle cx="946" cy="798" r="9" fill="#fff" opacity=".92"/>
<path d="M636,812 C664,776 715,758 795,790 C745,784 705,796 684,832 C670,818 652,812 636,812Z" fill="#32242e"/>
<path d="M900,802 C945,764 1015,766 1062,797 C1044,795 1034,802 1028,818 C1003,784 950,786 900,802Z" fill="#32242e"/>
<path d="M640,815 C655,830 662,845 668,862" stroke="#8c3a3a" stroke-width="4" fill="none"/>
<path d="M612,822 L628,800" stroke="#e02020" stroke-width="4"/>
<circle cx="840" cy="885" r="4" fill="#e8a0a8"/><circle cx="838" cy="905" r="3" fill="#e8b0b4"/>
<ellipse cx="975" cy="886" rx="20" ry="6" fill="#f6d0d4" opacity=".8"/>
<ellipse cx="1085" cy="688" rx="76" ry="23" fill="#3b3a3e" transform="rotate(-28 1085 688)"/>
<ellipse cx="1068" cy="745" rx="46" ry="15" fill="#3b3a3e" transform="rotate(6 1068 745)"/>
<path d="M1085,790 L1085,815" stroke="#333" stroke-width="3"/><path d="M1085,812 C1072,835 1075,850 1085,850 C1095,850 1098,835 1085,812Z" fill="#2c2c30"/>
<path d="M1075,930 L1078,1090" stroke="#a9a6ab" stroke-width="2.400"/>
</svg>
      <!-- /FOX -->
      <div class="cb" style="top:648.5px"><svg style="margin:2px 0 0 5px" width="31" height="32" viewBox="0 0 31 32"><path fill="#fff" d="M3 0h12.500l9 9v1.200l-13 13v6.800h-8.500a3 3 0 0 1-3-3v-24a3 3 0 0 1 3-3z"/><path fill="#3d3d3d" d="M15 2.200v7h7zM3 14.600h16v2.300h-16zM3 19.600h11.500v2.300h-11.500z"/><path fill="#fff" transform="translate(-2.200 0.300)" d="M23.400 17.100l4 4-9.900 9.900h-4v-4zM24.800 15.700l1.600-1.600a1 1 0 0 1 1.400 0l2.600 2.600a1 1 0 0 1 0 1.400l-1.600 1.600z"/></svg></div>
      <div class="cb" style="top:714.5px"><svg width="28" height="27" viewBox="0 0 30 30" preserveAspectRatio="none"><path fill="#fff" fill-rule="evenodd" d="M3 0h24a3 3 0 0 1 3 3v24a3 3 0 0 1-3 3h-24a3 3 0 0 1-3-3v-24a3 3 0 0 1 3-3zM3 3v24h24v-24z"/><circle cx="15" cy="11.500" r="4.200" fill="#fff"/><path fill="#fff" d="M6.500 23.500c0-4 5.500-5.500 8.500-5.500s8.500 1.500 8.500 5.500v0.500h-17z"/></svg></div>
      <div class="cb" style="top:780.5px"><svg style="margin-top:-2px" width="30" height="27" viewBox="0 0 32 28" preserveAspectRatio="none"><path fill="#fff" fill-rule="evenodd" d="M11 0h10l2.800 3.200h5.200a3 3 0 0 1 3 3v18.800a3 3 0 0 1-3 3h-26a3 3 0 0 1-3-3v-18.800a3 3 0 0 1 3-3h5.200zM16 8.200a7.300 7.300 0 1 0 0 14.600a7.300 7.300 0 1 0 0-14.600zM16 11.300a4.200 4.200 0 1 1 0 8.400a4.200 4.200 0 1 1 0-8.400z"/></svg></div>
      <div class="cb" style="top:846.5px"><svg width="30" height="20" viewBox="0 0 32 22" preserveAspectRatio="none"><path fill="#fff" d="M2.500 0h19a2.500 2.500 0 0 1 2.500 2.500v5.500l8-6.500v19l-8-6.500v5.500a2.500 2.500 0 0 1-2.500 2.500h-19a2.500 2.500 0 0 1-2.500-2.500v-17a2.500 2.500 0 0 1 2.500-2.500z"/></svg></div>
      <div class="cb" style="top:912.5px"><svg width="30" height="24" viewBox="0 0 32 26" preserveAspectRatio="none"><path fill="#fff" fill-rule="evenodd" d="M3 0h26a3 3 0 0 1 3 3v20a3 3 0 0 1-3 3h-26a3 3 0 0 1-3-3v-20a3 3 0 0 1 3-3zM11 3.500v19h17.500v-19z"/></svg></div>
      <div class="cb" style="top:978.5px"><svg width="30" height="24" viewBox="0 0 32 26" preserveAspectRatio="none"><path fill="#fff" fill-rule="evenodd" d="M3 0h26a3 3 0 0 1 3 3v20a3 3 0 0 1-3 3h-26a3 3 0 0 1-3-3v-20a3 3 0 0 1 3-3zM3.500 3.500v19h17.500v-19z"/></svg></div>
    </div>
  </div>
  <!-- RIGHT -->

  <div id="rp" class="abs">
    <div class="tab" style="left:10px">文件检视器</div>
    <div class="tab" style="left:149px">信息</div>
    <div class="tab" style="left:288px">动画</div>
    <div class="tab" style="left:427px">骨骼</div>
    <div class="tab" style="left:566px">插槽</div>
    <div class="abs" style="left:10px;top:68.200px;width:139px;height:1.700px;background:#efc676"></div>
    <div id="rc" class="abs">
      <div class="inp" style="left:13px;top:13.500px;width:517px;height:42.500px"><div class="abs" style="left:10px;top:7px;font-size:18px;line-height:26px;color:#f2f2f2;white-space:nowrap">D:/游戏资源/狐仙女友养成日记/</div></div>
      <div class="ib" style="left:538.500px;top:13.500px"><svg width="18" height="23" viewBox="0 0 18 23"><path fill="#fff" fill-rule="evenodd" d="M2 0h9.500l6.500 6.500v14.500a2 2 0 0 1-2 2h-14a2 2 0 0 1-2-2v-19a2 2 0 0 1 2-2zM10.500 2v5.500h5.500z"/></svg></div>
      <div class="ib" style="left:589px;top:13.500px"><svg width="23" height="19" viewBox="0 0 23 19"><path fill="#fff" d="M2 0h6.500l2.500 2.500h10a2 2 0 0 1 2 2v12.500a2 2 0 0 1-2 2h-19a2 2 0 0 1-2-2v-15a2 2 0 0 1 2-2z"/></svg></div>
      <div class="ib" style="left:639.500px;top:13.500px"><svg width="33" height="33" viewBox="0 0 24 24"><path fill="#fff" d="M17.650 6.350C16.200 4.900 14.210 4 12 4c-4.420 0-7.990 3.580-7.990 8s3.570 8 7.990 8c3.730 0 6.840-2.550 7.730-6h-2.080c-.820 2.330-3.040 4-5.650 4-3.310 0-6-2.690-6-6s2.690-6 6-6c1.660 0 3.140.690 4.220 1.780L13 11h7V4l-2.350 2.350z"/></svg></div>
      <div id="list" class="abs">
        <div class="abs" style="left:12px;top:5px;font-size:18px;line-height:26px;color:#efc676">路径</div>
        <div class="abs" style="left:336px;top:5px;font-size:18px;line-height:26px;color:#efc676">文件名</div>
        <div class="abs" style="left:0;top:36px;width:672px;height:2px;background:#5a5a5a"></div>
      <div class="r" style="top:38px"><i>/</i><b>2001aa.atlas</b></div>
      <div class="r" style="top:82px;background:#555;top:82px;height:45px;line-height:45px;width:671px"><i>/</i><b>2001aa.config.json</b></div>
      <div class="r" style="top:128px"><i>/</i><b>2001aa.json</b></div>
      <div class="r" style="top:173px"><i>/</i><b>2001aa.png</b></div>
      <div class="r" style="top:218px"><i>/</i><b>2001rr.atlas</b></div>
      <div class="r" style="top:263px"><i>/</i><b>2001rr.json</b></div>
      <div class="r" style="top:308px"><i>/</i><b>2001rr.png</b></div>
      <div class="r" style="top:353px"><i>/</i><b>2001xx.atlas</b></div>
      <div class="r" style="top:398px"><i>/</i><b>2001xx.json</b></div>
      <div class="r" style="top:443px"><i>/</i><b>2001xx.png</b></div>
      <div class="r" style="top:488px"><i>/</i><b>2002aa.atlas</b></div>
      <div class="r" style="top:533px"><i>/</i><b>2002aa.json</b></div>
      <div class="r" style="top:578px"><i>/</i><b>2002aa.png</b></div>
      <div class="r" style="top:623px"><i>/</i><b>2002rr.atlas</b></div>
      <div class="r" style="top:668px"><i>/</i><b>2002rr.json</b></div>
      <div class="r" style="top:713px"><i>/</i><b>2002rr.png</b></div>
      <div class="r" style="top:758px"><i>/</i><b>2002xx.atlas</b></div>
        <div class="abs" style="left:661px;top:40px;width:9.800px;height:736px;background:rgba(0,0,0,.6);border-radius:0 0 4px 4px"></div>
        <div class="abs" style="left:661.800px;top:2px;width:8.400px;height:43px;background:#4a4a4a;border-radius:4px"></div>
      </div>
      <div class="inp" style="left:13px;top:859px;width:613px;height:43px"></div>
      <div class="ib" style="left:639.500px;top:859px"><svg width="25" height="19" viewBox="0 0 25 19"><path fill="#fff" d="M2 0h6l2.500 2.500h8.500a2 2 0 0 1 2 2v1.500h-15.500a2.500 2.500 0 0 0-2.300 1.600l-3.200 8.400v-14a2 2 0 0 1 2-2zM6 7.500h17.500a1.500 1.500 0 0 1 1.400 2l-3 8a2.200 2.200 0 0 1-2 1.500h-18.500l3.200-10a2 2 0 0 1 1.400-1.500z"/></svg></div>
      <div class="inp" style="left:13px;top:917px;width:118px;height:42px;background:#333">
        <div class="abs" style="left:13px;top:9px;font-size:18px;line-height:24px;color:#f2f2f2">Spine</div>
        <svg class="abs" style="left:89px;top:17px" width="14" height="8" viewBox="0 0 14 8"><path d="M0.500 0.500h13L7 7z" fill="#fff"/></svg>
      </div>
      <div class="inp ctr" style="left:145px;top:917px;width:538px;height:42px;background:#333;font-size:18px;color:#f2f2f2;padding-bottom:2px">创建配置文件</div>
      <div class="inp" style="left:13px;top:835px;width:118px;height:82px;background:#333">
        <div class="abs" style="left:28px;top:11px;font-size:18px;line-height:24px;color:#f2f2f2">Live2D</div>
        <svg class="abs" style="left:10px;top:53px" width="8" height="13" viewBox="0 0 8 13"><path d="M0.500 0.500v12L7.500 6.500z" fill="#fff"/></svg>
        <div class="abs" style="left:28px;top:47px;font-size:18px;line-height:24px;color:#f2f2f2">Spine</div>
      </div>
    </div>
  </div>
</div>
<!-- TASKBAR -->
<div id="taskbar" class="abs">
  <div class="abs" style="left:0;top:0;width:1920px;height:1px;background:rgba(120,120,120,.35)"></div>
  <!-- weather -->
  <svg class="abs" style="left:24px;top:16px" width="32" height="28" viewBox="0 0 32 28"><defs><linearGradient id="sun" x1="0" y1="0" x2="1" y2="1"><stop offset="0" stop-color="#fdb92e"/><stop offset="1" stop-color="#f27f1b"/></linearGradient><linearGradient id="cl" x1="0" y1="0" x2="0" y2="1"><stop offset="0" stop-color="#eaf2fd"/><stop offset="1" stop-color="#8db4ec"/></linearGradient></defs><circle cx="21.500" cy="9.500" r="8" fill="url(#sun)"/><path d="M7 27a6 6 0 0 1-.8-11.900A8.500 8.500 0 0 1 22 12.500a7.300 7.300 0 0 1 3 14.500z" fill="url(#cl)"/></svg>
  <div class="abs" style="left:64px;top:11px;font-size:15px;line-height:18px;color:#2a2a2a;letter-spacing:-.3px">22°C</div>
  <div class="abs" style="left:64px;top:31px;font-size:14.500px;line-height:18px;color:#3a3a3a">多云</div>
  <!-- start -->
  <svg class="abs" style="left:501px;top:16px" width="29" height="29" viewBox="0 0 29 29"><defs><linearGradient id="wg" x1="0" y1="0" x2="1" y2="1"><stop offset="0" stop-color="#4cc4f8"/><stop offset="1" stop-color="#0a6fd0"/></linearGradient></defs><path fill="url(#wg)" d="M1 0h12.700v13.700H0V1a1 1 0 0 1 1-1zM15.300 0H28a1 1 0 0 1 1 1v12.700H15.300zM0 15.300h13.700V29H1a1 1 0 0 1-1-1zM15.300 15.300H29V28a1 1 0 0 1-1 1H15.300z"/></svg>
  <!-- search -->
  <div class="abs" style="left:548px;top:10.500px;width:273px;height:39px;border-radius:20px;background:rgba(255,255,255,.62);border:1px solid rgba(255,255,255,.8);box-shadow:0 .5px 1.500px rgba(0,0,0,.18)"></div>
  <svg class="abs" style="left:560px;top:18px" width="24" height="24" viewBox="0 0 24 24" fill="none" stroke="#222" stroke-width="2"><circle cx="9.700" cy="10.300" r="6.800"/><path d="M14.600 15.200 20 20.600" stroke-linecap="round"/></svg>
  <div class="abs" style="left:593px;top:18px;font-size:17.500px;line-height:24px;color:#5c5c5c">搜索</div>
  <svg class="abs" style="left:756px;top:16px" width="59" height="31.500" viewBox="0 0 59 33" preserveAspectRatio="none"><defs><clipPath id="gc"><ellipse cx="29.500" cy="16.500" rx="29.500" ry="16.500"/></clipPath><linearGradient id="gd" x1="0" y1="0" x2="0" y2="1"><stop offset="0" stop-color="#f5cf58"/><stop offset=".45" stop-color="#e0a420"/><stop offset="1" stop-color="#b37a10"/></linearGradient><linearGradient id="gf" x1="0" y1="0" x2="0" y2="1"><stop offset="0" stop-color="#6f6f80"/><stop offset="1" stop-color="#a9a9a6"/></linearGradient></defs><g clip-path="url(#gc)"><rect width="59" height="33" fill="#393a5c"/><path d="M40 0h19v20h-19z" fill="#4a3340" opacity=".7"/><rect y="23.300" width="59" height="10" fill="url(#gf)"/><rect x="6" y="11" width="6" height="13" fill="url(#gd)"/><rect x="15.400" y="4.700" width="11" height="20" fill="url(#gd)"/><rect x="46.700" y="7" width="9.500" height="17" fill="url(#gd)"/><rect x="26.700" y="1" width="19.300" height="27.500" rx="1" fill="url(#gd)"/><path d="M30 9c4-3 10-3 13 0-2 3-10 4-13 0z" fill="#f7b53a"/><path d="M30 13.500c4 2.500 10 2.500 14 0v5c-4 2.500-10 2.500-14 0z" fill="#d9c9b0" opacity=".75"/><path d="M17 9h8M17 13h8M17 17h8M48 11h7M48 15h7M28 23h16" stroke="#f8dc7a" stroke-width="1" opacity=".6"/></g></svg>
  <!-- task view -->
  <svg class="abs" style="left:837px;top:15px" width="30" height="30" viewBox="0 0 30 30"><rect x="0" y="8.500" width="22" height="20.500" rx="2.500" fill="#2b2b2b"/><rect x="8.500" y="1" width="21.500" height="19.500" rx="2.500" fill="#e9e9e9" opacity=".93"/></svg>
  <!-- explorer -->
  <svg class="abs" style="left:892px;top:16px" width="30" height="28" viewBox="0 0 30 28"><path d="M0 2.500A2.500 2.500 0 0 1 2.500 0h7l3 3H28a2 2 0 0 1 2 2v4H0z" fill="#e8a315"/><rect x="0" y="4.500" width="30" height="22.500" rx="1.500" fill="#fbcb56"/><path d="M5 21.500a2 2 0 0 1 2-2h16a2 2 0 0 1 2 2v5.500H5z" fill="#1c78d3"/><rect x="8.500" y="22.500" width="13" height="2" rx="1" fill="#0b4f9c"/></svg>
  <div class="abs" style="left:903px;top:50px;width:8px;height:4px;border-radius:2px;background:#8a8a86"></div>
  <!-- 360 -->
  <svg class="abs" style="left:948px;top:14px" width="29" height="31" viewBox="0 0 29 31"><circle cx="13.500" cy="16.500" r="13" fill="#fff"/><path d="M13.500 7.500a9 9 0 1 0 8.300 12.500h-5a4.800 4.800 0 0 1-7.800-2h13.400a9 9 0 0 0-8.900-10.500zm-4.600 7.200a4.800 4.800 0 0 1 9.200 0z" fill="#5fb829"/><path d="M2 27C-1 18 8 4 25 2c-9 4-17 12-20 24z" fill="#6cc433"/><text x="17.500" y="29.500" font-family="Liberation Sans, sans-serif" font-size="8.500" font-weight="bold" fill="#4fae1f" stroke="#fff" stroke-width=".4">AI</text></svg>
  <div class="abs" style="left:958px;top:50px;width:8px;height:4px;border-radius:2px;background:#8a8a86"></div>
  <!-- firefox -->
  <svg class="abs" style="left:1002px;top:14px" width="29" height="30" viewBox="0 0 29 30"><defs><radialGradient id="ff" cx=".7" cy=".15" r="1"><stop offset="0" stop-color="#ffe226"/><stop offset=".45" stop-color="#ff8a16"/><stop offset=".8" stop-color="#fa2d4f"/><stop offset="1" stop-color="#d31a86"/></radialGradient></defs><path d="M14.500 29.500C6.500 29.500.5 23.500.5 16c0-4 2-8 4.500-9.500 0 1.500.5 2.500 1.500 3C7 6 11 4 13 5c1-2 2.500-4 4-4.500 0 3 3.500 4.500 6 7.500 3 3 5 5 5 9 0 7-6 12.500-13.500 12.500z" fill="url(#ff)"/><circle cx="12.500" cy="16.500" r="6" fill="#7a3fe0"/><path d="M6.500 14c2-3 6-3.500 8.500-2-2 .5-2.500 2-1.500 3 2 1.500 5 .5 5.500-1.500 1.500 4-1 8.500-5.500 8.500-5 0-8-4.500-7-8z" fill="#9059ff" opacity=".7"/></svg>
  <!-- notepad++ -->
  <svg class="abs" style="left:1057px;top:14px" width="30" height="30" viewBox="0 0 30 30"><path d="M2 3h15l6 6v19H2z" fill="#e9ebe2" stroke="#8d8f88" stroke-width=".8"/><rect x="3.500" y="10" width="18" height="16" fill="#8fd13a"/><path d="M5 18c3-4 6 2 9-2s4 2 7-1" stroke="#2f5d12" stroke-width="1.500" fill="none"/><circle cx="13" cy="12" r="3" fill="#cfe89a" stroke="#3d6d18" stroke-width=".8"/><path d="M27.500 1.500 29.500 3 21 20l-2.500 1 .5-2.500z" fill="#e2a11e" stroke="#7b4b0e" stroke-width=".6"/></svg>
  <div class="abs" style="left:1068px;top:50px;width:8px;height:4px;border-radius:2px;background:#8a8a86"></div>
  <!-- edge -->
  <svg class="abs" style="left:1112px;top:15px" width="31" height="31" viewBox="0 0 31 31"><defs><linearGradient id="e1" x1="0" y1="0" x2="1" y2="1"><stop offset="0" stop-color="#35b8ee"/><stop offset="1" stop-color="#1257ad"/></linearGradient><linearGradient id="e2" x1="0" y1="0" x2="1" y2="0"><stop offset="0" stop-color="#27a4e6"/><stop offset=".55" stop-color="#3cc6b4"/><stop offset="1" stop-color="#63d95f"/></linearGradient></defs><circle cx="15.500" cy="15.500" r="15" fill="url(#e1)"/><path d="M1 13C2.500 5.500 8.500.500 15.500.500c9 0 15 6.500 15 14 0 4-3 6-6 6-2.500 0-5-1-5.500-3 0-5-3-7.500-7.500-7.500C7 10 3.500 14.500 1 13z" fill="url(#e2)"/><path d="M17.200 17.200c0-2.700 2.400-4.400 5.300-4.400 2.600 0 4.500 1.500 4.500 3.700 0 2.500-1.900 4.300-4.200 4.300-3.200 0-5.600-1.300-5.600-3.600z" fill="#f0e5c9"/><path d="M10.500 15.500c-1.500 6.500 3.500 12.500 11 12.500 3 0 5.500-1 7-2.500C26 29 21.500 31 16.500 31 8 31 2.500 25 4.500 18c1-3.500 4-5.500 7-6-.5 1-.800 2.300-1 3.500z" fill="#0d4a9c"/></svg>
  <!-- xunlei -->
  <svg class="abs" style="left:1167px;top:14.500px" width="30" height="30" viewBox="0 0 30 30"><rect width="30" height="30" rx="5" fill="#3f86f6"/><path d="M3 7.500c4 .5 7 2 9 4.500 3-4 8-7 13.500-8-3 3-5 6.500-5.500 10l6.500 2.500-7 1.500c-.5 3-2.500 6-5.500 8.500.5-3-1-6-4-7.500 1.500-.500 2-2 1.500-3.500C10.500 12 7 9.500 3 7.500z" fill="#fff"/></svg>
  <!-- baidu pan -->
  <svg class="abs" style="left:1222px;top:15px" width="30" height="30" viewBox="0 0 30 30"><rect width="30" height="30" rx="6" fill="#f9fafc"/><g fill="none" stroke-width="2.600"><circle cx="9.500" cy="17.500" r="4.500" stroke="#26b7f5"/><circle cx="20.500" cy="17.500" r="4.500" stroke="#26b7f5"/><circle cx="15" cy="11" r="4.500" stroke="#26b7f5"/><path d="M10.500 10.500a4.500 4.500 0 0 0 9 .5" stroke="#f2445a"/></g><rect x="10" y="27" width="5" height="2" fill="#f2445a"/><rect x="15" y="27" width="5" height="2" fill="#2f7cf6"/></svg>
  <div class="abs" style="left:1233px;top:50px;width:8px;height:4px;border-radius:2px;background:#8a8a86"></div>
  <!-- steam -->
  <svg class="abs" style="left:1277px;top:15px" width="30" height="30" viewBox="0 0 30 30"><defs><linearGradient id="st" x1="0" y1="0" x2="0" y2="1"><stop offset="0" stop-color="#131a3f"/><stop offset=".6" stop-color="#15406f"/><stop offset="1" stop-color="#1a86b8"/></linearGradient><clipPath id="sc"><circle cx="15" cy="15" r="14.500"/></clipPath></defs><circle cx="15" cy="15" r="14.500" fill="url(#st)"/><g clip-path="url(#sc)"><path d="M-1 13.500 9 17.700a4 4 0 0 1 2.500-.600L16 11a5.300 5.300 0 1 1 5.300 5.300l-6 4.400a4 4 0 0 1-7.900.7L-1 19z" fill="#fff"/><circle cx="21.300" cy="11" r="3.400" fill="#1c2a55"/><circle cx="21.300" cy="11" r="2.200" fill="#fff" opacity=".9"/><circle cx="11.300" cy="20.700" r="2.700" fill="#1a3d68"/></g></svg>
  <div class="abs" style="left:1287px;top:50px;width:8px;height:4px;border-radius:2px;background:#8a8a86"></div>
  <!-- magnifier -->
  <svg class="abs" style="left:1332px;top:14px" width="30" height="31" viewBox="0 0 30 31"><g stroke-linecap="round"><path d="M12 18.500 3.500 27.500" stroke="#6b3a04" stroke-width="6.500"/><circle cx="18.500" cy="11.500" r="8.300" fill="none" stroke="#6b3a04" stroke-width="5.600"/><path d="M12 18.500 3.500 27.500" stroke="#ff8a0d" stroke-width="4.500"/><circle cx="18.500" cy="11.500" r="8.300" fill="none" stroke="#ff8a0d" stroke-width="3.800"/></g></svg>
  <div class="abs" style="left:1343px;top:50px;width:8px;height:4px;border-radius:2px;background:#8a8a86"></div>
  <!-- active app -->
  <div class="abs" style="left:1378px;top:6px;width:48px;height:48px;border-radius:5px;background:rgba(255,255,255,.42);border:1px solid rgba(255,255,255,.35)"></div>
  <svg class="abs" style="left:1387px;top:15px" width="30" height="30" viewBox="0 0 20 20"><defs><clipPath id="ic2"><rect width="20" height="20" rx="1.800"/></clipPath></defs><g clip-path="url(#ic2)"><rect width="20" height="20" fill="#2f7fe8"/><path d="M0 0h11l4 6.500L0 15.500z" fill="#76bd3b"/><path d="M11 0h9v4.500l-5 2z" fill="#f9b410"/><path d="M20 4.500v9L15 6.500z" fill="#e0306f"/><path d="M15 6.500 20 13.500V20H0v-4.500z" fill="#2c95ee"/><path d="M0 15.500 14 8l6 12H0z" fill="#2e86ea" opacity=".6"/><circle cx="16.500" cy="16.500" r=".9" fill="#f5c33b"/></g></svg>
  <div class="abs" style="left:1392px;top:50px;width:20px;height:4px;border-radius:2px;background:#0b6fd6"></div>
  <!-- tray -->
  <svg class="abs" style="left:1514px;top:25px" width="16" height="10" viewBox="0 0 16 10" fill="none" stroke="#1c1c1c" stroke-width="1.700"><path d="M1.500 8.500 8 2l6.500 6.500"/></svg>
  <svg class="abs" style="left:1551px;top:22px" width="23" height="18" viewBox="0 0 23 18"><path d="M0.500 1.500h7l3.500 7 4-7h6L17 8l-3-4-4 8.500z" fill="#e8261c"/><path d="M12 17.500a3 3 0 0 1-.3-6 4 4 0 0 1 7.500-1 3.500 3.500 0 0 1 .3 7z" fill="#1e9df2"/><path d="M14 17.500a2.500 2.500 0 0 1 0-5 3 3 0 0 1 5.500.5 2.300 2.300 0 0 1-.5 4.500z" fill="#56c7fb"/></svg>
  <svg class="abs" style="left:1591px;top:22px" width="21" height="16" viewBox="0 0 21 16" fill="none" stroke="#333" stroke-width="1.300"><rect x=".8" y=".8" width="19.400" height="14" rx="3"/><path d="M.8 9.800h19.400M10.500 9.800v5"/></svg>
  <div class="abs" style="left:1633px;top:17px;font-size:19px;line-height:26px;color:#4a4a4a;font-weight:300;font-family:'Liberation Sans','Noto Sans CJK SC',sans-serif">英</div>
  <svg class="abs" style="left:1679px;top:19px" width="22" height="22" viewBox="0 0 22 22"><g transform="rotate(-8 11 11)"><rect x="1.500" y="2" width="19" height="18" rx="3.500" fill="#f4511e"/><path d="M15.500 7.500c-2-1.800-7.500-2-8.500.3-.9 2.200 1.500 2.800 4 3.200s5 1 4 3.300c-1 2.200-6.500 2-9 .2" fill="none" stroke="#fff" stroke-width="2.500" stroke-linecap="round"/></g></svg>
  <svg class="abs" style="left:1726px;top:21px" width="22" height="17" viewBox="0 0 22 17" fill="none" stroke="#222" stroke-width="1.400" stroke-linecap="round"><path d="M1.500 6.500a13.500 13.500 0 0 1 19 0"/><path d="M4.800 9.800a8.800 8.800 0 0 1 12.400 0"/><path d="M8 13a4.300 4.300 0 0 1 6 0"/><circle cx="11" cy="15.300" r="1" fill="#222" stroke="none"/></svg>
  <svg class="abs" style="left:1756px;top:22px" width="21" height="16" viewBox="0 0 21 16" fill="none" stroke="#333" stroke-width="1.200"><path d="M1 5.500h3.500L9 1.500v13L4.500 10.500H1z" stroke-linejoin="round"/><path d="M13.500 5 19.500 11M19.500 5 13.500 11"/></svg>
  <svg class="abs" style="left:1786px;top:19px" width="22" height="18" viewBox="0 0 22 18"><rect x="2" y="6.500" width="16.500" height="9.500" rx="2" fill="none" stroke="#222" stroke-width="1.300"/><rect x="3.800" y="8.300" width="12.900" height="5.900" rx=".8" fill="#222"/><path d="M19.200 9.500h1.600v3.500h-1.600z" fill="#222"/><path d="M5.500.5 1.500 7h3l-1 4.500L8 4.500H5z" fill="#222" stroke="#f1e3c3" stroke-width=".8"/></svg>
  <div class="abs" style="right:24.500px;top:10.500px;font-size:15px;line-height:18px;color:#222;letter-spacing:-.55px;text-align:right">17:45</div>
  <div class="abs" style="right:24.500px;top:30.500px;font-size:15.400px;line-height:18px;color:#222;text-align:right">2026/4/15</div>
</div>
</body>
</html>
